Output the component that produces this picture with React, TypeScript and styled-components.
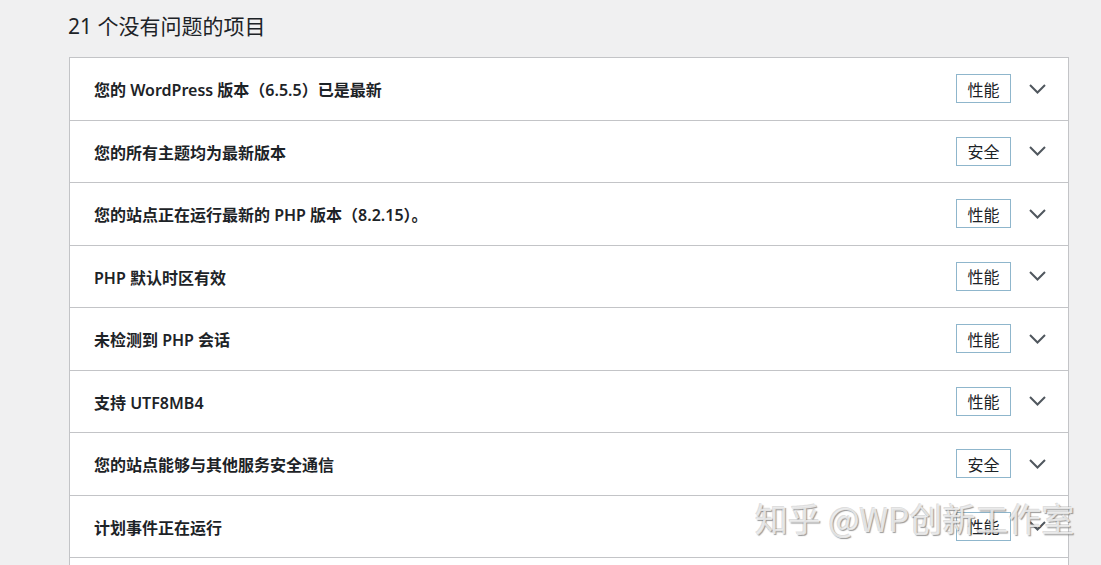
import React from "react";
import styled, { createGlobalStyle } from "styled-components";

const Global = createGlobalStyle`
  html, body { margin: 0; padding: 0; background: #f0f0f1; overflow: hidden; }
  body { font-family: "Open Sans", "Noto Sans", "Noto Sans CJK SC", sans-serif; color: #1d2327; }
`;

const Page = styled.div`
  position: relative;
  width: 1101px;
  height: 565px;
  overflow: hidden;
  padding-left: 69px;
  box-sizing: border-box;
`;

const Heading = styled.h2`
  margin: 0;
  padding-top: 11px;
  margin-left: -1px;
  font-size: 21px;
  line-height: 30px;
  font-weight: 400;
  color: #1d2327;
  font-family: "Noto Sans", "Noto Sans CJK SC", sans-serif;
`;

const Card = styled.div`
  margin-top: 16px;
  width: 1000px;
  box-sizing: border-box;
  background: #fff;
  border: 1px solid #c3c4c7;
  border-bottom: none;
  padding-bottom: 40px;
`;

const Row = styled.div`
  height: 62.5px;
  box-sizing: border-box;
  border-bottom: 1px solid #c3c4c7;
  display: flex;
  align-items: center;
  padding: 0 22px 0 24px;
`;

const Title = styled.span`
  flex: 1;
  font-size: 16px;
  font-weight: 600;
  color: #1d2327;
  font-family: "Noto Sans", "Noto Sans CJK SC", sans-serif;
  padding-top: 1px;
`;

const Badge = styled.span`
  display: inline-flex;
  align-items: center;
  justify-content: center;
  height: 29px;
  width: 55px;
  box-sizing: border-box;
  border: 1px solid #8fb6cc;
  font-size: 16px;
  color: #1d2327;
  font-family: "Noto Sans CJK SC", sans-serif;
  margin-right: 18px;
`;

const Chevron = styled.svg`
  width: 17px;
  height: 10px;
  display: block;
`;

const Watermark = styled.div`
  position: absolute;
  left: 755px;
  top: 497px;
  font-size: 33px;
  line-height: 42px;
  font-family: "Noto Sans CJK SC", sans-serif;
  color: rgba(240, 240, 240, 0.85);
  text-shadow: 1px 1px 1px rgba(70, 70, 70, 0.55), -1px -1px 0 rgba(160, 160, 160, 0.35);
  white-space: nowrap;
  pointer-events: none;
`;

const items: { title: string; badge: string }[] = [
  { title: "您的 WordPress 版本（6.5.5）已是最新", badge: "性能" },
  { title: "您的所有主题均为最新版本", badge: "安全" },
  { title: "您的站点正在运行最新的 PHP 版本（8.2.15）。", badge: "性能" },
  { title: "PHP 默认时区有效", badge: "性能" },
  { title: "未检测到 PHP 会话", badge: "性能" },
  { title: "支持 UTF8MB4", badge: "性能" },
  { title: "您的站点能够与其他服务安全通信", badge: "安全" },
  { title: "计划事件正在运行", badge: "性能" },
];

export default function App() {
  return (
    <>
      <Global />
      <Page>
        <Heading>21 个没有问题的项目</Heading>
        <Card>
          {items.map((it, i) => (
            <Row key={i}>
              <Title>{it.title}</Title>
              <Badge>{it.badge}</Badge>
              <Chevron viewBox="0 0 17 10">
                <path d="M1 1 L8.5 8.5 L16 1" fill="none" stroke="#50575e" strokeWidth="2" />
              </Chevron>
            </Row>
          ))}
        </Card>
        <Watermark>知乎 @WP创新工作室</Watermark>
      </Page>
    </>
  );
}
